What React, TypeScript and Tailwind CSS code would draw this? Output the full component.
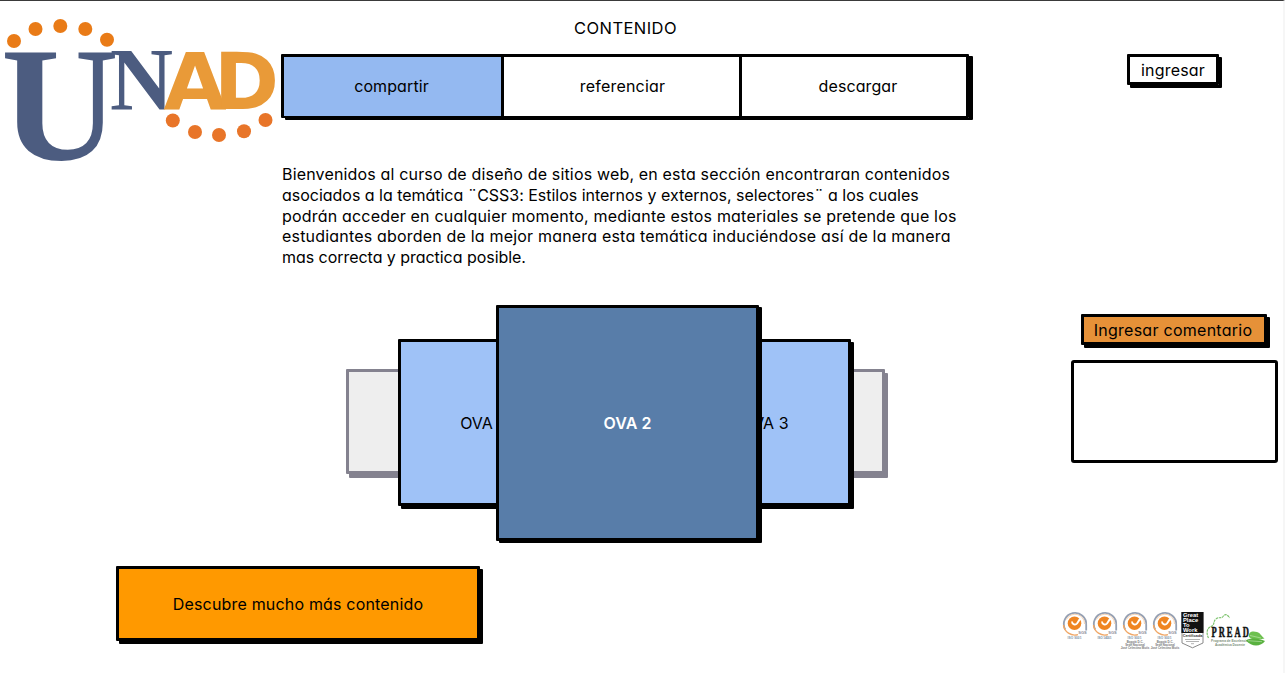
import type { ReactNode } from "react";

function SketchBox({ children, className = "", line = "border-black" }: { children?: ReactNode; className?: string; line?: string }) {
  return (
    <div className={`flex items-center justify-center rounded-[1px] border-[3px] whitespace-nowrap ${line} ${className}`}>
      {children}
    </div>
  );
}

const TOP_DOTS = [[14, 40], [35.5, 28], [60.3, 25], [85.3, 28], [107, 38.7]];
const BOTTOM_DOTS = [[172.8, 119.5], [195, 131], [219, 134], [244, 130.3], [265.5, 119]];

function UnadLogo() {
  return (
    <svg width="281" height="200" viewBox="0 0 281 200" className="block">
      {TOP_DOTS.map(([x, y]) => <circle key={x} cx={x} cy={y} r="7" fill="#e97b17" />)}
      {BOTTOM_DOTS.map(([x, y]) => <circle key={x} cx={x} cy={y} r="7" fill="#e87529" />)}
      <g fontFamily="Liberation Serif" fontWeight="700" fill="#4c5c80">
        <text x="1" y="158" fontSize="164" textLength="118" lengthAdjust="spacingAndGlyphs">U</text>
        <text x="110" y="108" fontSize="88" textLength="63" lengthAdjust="spacingAndGlyphs">N</text>
      </g>
      <g fontFamily="DejaVu Sans" fontWeight="700" fontSize="78" fill="#e99a38">
        <text x="163.5" y="108" textLength="63" lengthAdjust="spacingAndGlyphs">A</text>
        <text x="214" y="108" textLength="65" lengthAdjust="spacingAndGlyphs">D</text>
      </g>
    </svg>
  );
}

function Seal({ x, label, lines = [] }: { x: number; label: string; lines?: string[] }) {
  return (
    <g transform={`translate(${x} 24)`}>
      <path d="M-9.8 5.5A11.2 11.2 0 1 1 11.2 1V6.5" fill="none" stroke="#95a0b3" strokeWidth="1.8" />
      <path d="M-11.5 1A11.3 11.3 0 0 0 3 10.600" fill="none" stroke="#f0a868" strokeWidth="1.4" />
      <path d="M-8.500 -4.500A9.500 9.500 0 0 1 9.500 0" fill="none" stroke="#f3c79e" strokeWidth="0.8" />
      <circle cy="-0.8" cx="-0.5" r="6.8" fill="#ef8522" />
      <path d="M-3 -2.500C-3 0.500 0.500 1.500 2 -0.500C3 -2 4 -4 5.500 -5.500" fill="none" stroke="#fff" strokeWidth="1.9" />
      <text x="7.5" y="9.8" fontSize="4" fontWeight="700" textAnchor="middle" fill="#8b8b95">SGS</text>
      <text x="-0.5" y="14.6" fontSize="3.2" fontWeight="700" textAnchor="middle" textLength="14" fill="#7d93a8">{label}</text>
      {lines.map((line, i) => (
        <text key={line} y={19.4 + i * 2.8} fontSize="2.9" fontWeight="700" textAnchor="middle" fill="#777">{line}</text>
      ))}
    </g>
  );
}

const CAMPUS = ["Bogotá D.C.", "Sede Nacional", "José Celestino Mutis"];

function Badges() {
  return (
    <svg width="225" height="60" viewBox="0 0 225 60" className="block" fontFamily="Liberation Sans">
      <Seal x={20} label="ISO 9001" />
      <Seal x={50} label="ISO 14001" />
      <Seal x={80} label="ISO 9001" lines={CAMPUS} />
      <Seal x={110} label="ISO 9001" lines={CAMPUS} />
      <path d="M127 33V43L137.5 47.8L148 43V33" fill="#fff" stroke="#8a8a8a" />
      <rect x="126.3" y="12" width="22.3" height="21" fill="#111" />
      <g fill="#fff" fontSize="5.8" fontWeight="700">
        <text x="128" y="17.4">Great</text>
        <text x="128" y="22.2">Place</text>
        <text x="128" y="27">To</text>
        <text x="128" y="31.8">Work</text>
      </g>
      <text x="137.5" y="37.2" fontSize="3.8" fontWeight="700" textAnchor="middle" fill="#333">Certificada</text>
      <path d="M130 39.5H145M131 41.5H144M136 43.7H139" stroke="#aaa" strokeWidth="0.9" />
      <path d="M153.5 38C151 33 152 28 156 26.5C160 25 158 21 161 19C163 16.5 166 19 168 16.5C170 13.5 173 14.5 174.5 18" fill="none" stroke="#7cc26c" strokeWidth="1.2" strokeDasharray="2.5 0.7" />
      <text transform="translate(156.5 37.2) scale(0.62 1)" fontFamily="Liberation Serif" fontSize="13.8" fontWeight="700" letterSpacing="3.2" fill="#111" stroke="#111" strokeWidth="0.5">PREAD</text>
      <text x="156" y="42" fontSize="3.4" fontWeight="700" textLength="37" lengthAdjust="spacingAndGlyphs" fill="#7c8f7a">Programa de Excelencia</text>
      <text x="160" y="46" fontSize="3.4" fontWeight="700" textLength="30" lengthAdjust="spacingAndGlyphs" fill="#7c8f7a">Académica Docente</text>
      <path d="M194 37C193 32 197 30.5 202 32C205.500 33 206 36 209.500 38.5C204 39.5 198 40.500 194 37Z" fill="#6dc04f" />
      <path d="M191 40.5C195 37.5 204 38 210 41C206 46.500 197 47.5 191 40.500Z" fill="#59b13f" />
      <path d="M195 35.500L206 38M193 40.7L207 41.7" stroke="#c5e8b6" strokeWidth="0.6" />
    </svg>
  );
}

export default function App() {
  return (
    <div className="flex h-[673px] w-[1285px] flex-col overflow-hidden border-t border-r-2 border-t-[#3a3a3a] border-r-[#f6f6f6] bg-white font-['Inter','Noto_Sans',sans-serif] text-[16px] leading-5 text-black [font-feature-settings:'cv11']">
      <div className="flex h-[565px] shrink-0">
        <div className="w-[281px] shrink-0">
          <UnadLogo />
        </div>

        <main className="w-[692px] shrink-0 pt-[17px]">
          <h1 className="w-[689px] text-center text-[16.5px] tracking-[0.45px]">CONTENIDO</h1>

          <nav className="mt-4 flex h-16 w-[688px] rounded-[1px] border-[3px] border-r-2 border-b-2 border-black text-center leading-[59px] shadow-[4px_2px_0_0_#000]">
            <a className="w-[217px] bg-[#94b9f1] pr-0.5 tracking-[0.1px]">compartir</a>
            <a className="w-[241px] border-x-[3px] border-black pl-0.5 tracking-[0.2px]">referenciar</a>
            <a className="flex-1 border-r border-black pl-2 tracking-[0.1px]">descargar</a>
          </nav>

          <p className="mt-[46px] pl-px leading-[20.75px] whitespace-nowrap">
            <span className="block tracking-[0.167px]">Bienvenidos al curso de diseño de sitios web, en esta sección encontraran contenidos</span>
            <span className="block tracking-[-0.02px]">asociados a la temática ¨CSS3: Estilos internos y externos, selectores¨ a los cuales</span>
            <span className="block tracking-[0.19px]">podrán acceder en cualquier momento, mediante estos materiales se pretende que los</span>
            <span className="block tracking-[0.19px]">estudiantes aborden de la mejor manera esta temática induciéndose así de la manera</span>
            <span className="block tracking-[-0.04px]">mas correcta y practica posible.</span>
          </p>

          <div className="relative mt-[37px] h-[236px]">
            <SketchBox line="border-[#84828f]" className="absolute top-[64px] left-[65px] h-[105px] w-[539px] bg-[#eee] shadow-[3px_4px_0_0_#84828f]" />
            <SketchBox className="absolute top-[34px] left-[117px] h-[167px] w-[168px] bg-[#9fc2f7] pt-0.5 shadow-[3px_3px_0_0_#000]">
              OVA 1
            </SketchBox>
            <SketchBox className="absolute top-[34px] left-[398px] h-[167px] w-[172px] bg-[#9fc2f7] pt-0.5 shadow-[3px_3px_0_0_#000]">
              OVA 3
            </SketchBox>
            <SketchBox className="absolute top-0 left-[215px] h-[236px] w-[263px] bg-[#587da9] font-semibold text-white shadow-[3px_2px_0_0_#000]">
              OVA 2
            </SketchBox>
          </div>
        </main>

        <aside className="flex flex-1 flex-col pt-[53px]">
          <SketchBox className="ml-[154px] h-[31px] w-[92px] tracking-[0.2px] shadow-[3px_3px_0_0_#000]">ingresar</SketchBox>
          <SketchBox className="mt-[229px] ml-[108px] h-[31px] w-[186px] bg-[#e69138] pr-0.5 tracking-[0.27px] shadow-[3px_3px_0_0_#000]">
            Ingresar comentario
          </SketchBox>
          <SketchBox className="mt-[15px] ml-[98px] h-[103px] w-[207px] rounded-[3px]" />
        </aside>
      </div>

      <div className="flex">
        <SketchBox className="ml-[116px] h-[75px] w-[364px] bg-[#ff9900] tracking-[0.18px] shadow-[3px_3px_0_0_#000]">
          Descubre mucho más contenido
        </SketchBox>
        <div className="mt-[34px] ml-[575px] shrink-0">
          <Badges />
        </div>
      </div>
    </div>
  );
}
